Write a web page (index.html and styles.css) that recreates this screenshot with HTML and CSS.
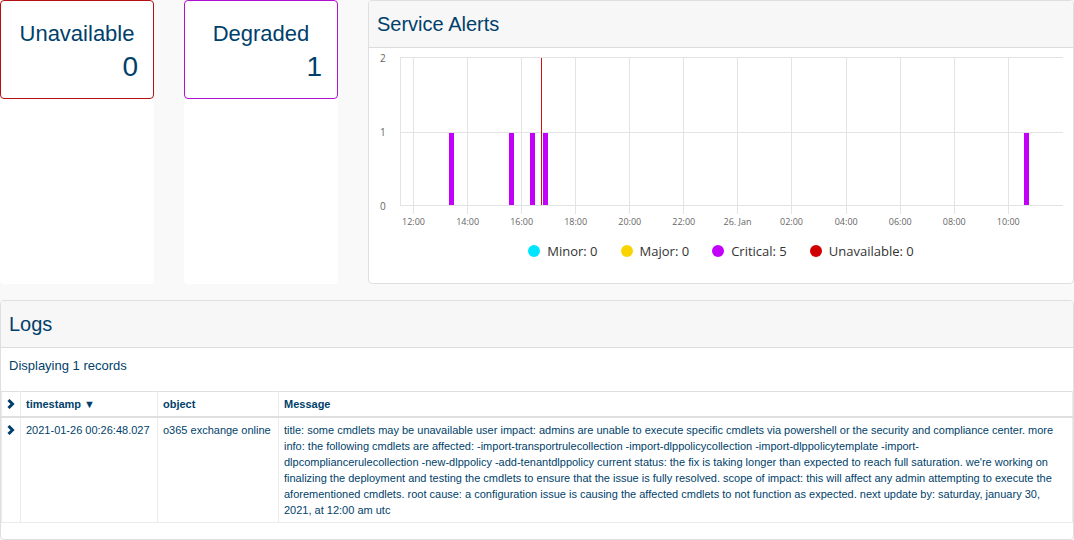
FILE: index.html
```html
<!DOCTYPE html>
<html lang="en">
<head>
    <meta charset="UTF-8">
    <meta name="viewport" content="width=device-width, initial-scale=1.0">
    <title>Service Status</title>
    <link rel="stylesheet" href="styles.css">
</head>
<body>
    <div class="dashboard">
        <div class="top-row">
            <div class="tile">
                <div class="tile-card unavailable">
                    <h3>Unavailable</h3>
                    <p>0</p>
                </div>
            </div>

            <div class="tile">
                <div class="tile-card degraded">
                    <h3>Degraded</h3>
                    <p>1</p>
                </div>
            </div>

            <div class="panel">
                <h2 class="panel-header">Service Alerts</h2>
                <div class="chart">
                    <div class="y-axis">
                        <span>2</span>
                        <span>1</span>
                        <span>0</span>
                    </div>
                    <svg class="plot" role="img" aria-label="Service alerts over time">
                        <g class="grid-lines">
                            <line x1="0" y1="5.5" x2="100%" y2="5.5"/>
                            <line x1="0" y1="80.5" x2="100%" y2="80.5"/>
                            <line x1="0" y1="153.5" x2="100%" y2="153.5"/>
                            <line x1="0.1%" y1="5" x2="0.1%" y2="153"/>
                            <line x1="2.04%" y1="5" x2="2.04%" y2="162"/>
                            <line x1="10.2%" y1="5" x2="10.2%" y2="162"/>
                            <line x1="18.35%" y1="5" x2="18.35%" y2="162"/>
                            <line x1="26.5%" y1="5" x2="26.5%" y2="162"/>
                            <line x1="34.65%" y1="5" x2="34.65%" y2="162"/>
                            <line x1="42.8%" y1="5" x2="42.8%" y2="162"/>
                            <line x1="50.9%" y1="5" x2="50.9%" y2="162"/>
                            <line x1="59.05%" y1="5" x2="59.05%" y2="162"/>
                            <line x1="67.3%" y1="5" x2="67.3%" y2="162"/>
                            <line x1="75.45%" y1="5" x2="75.45%" y2="162"/>
                            <line x1="83.6%" y1="5" x2="83.6%" y2="162"/>
                            <line x1="91.75%" y1="5" x2="91.75%" y2="162"/>
                        </g>
                        <g class="bars">
                            <rect x="7.39%" y="81" width="5" height="72"/>
                            <rect x="16.44%" y="81" width="5" height="72"/>
                            <rect x="19.61%" y="81" width="5" height="72"/>
                            <rect x="21.57%" y="81" width="5" height="72"/>
                            <rect x="94.12%" y="81" width="5" height="72"/>
                        </g>
                        <g class="now-line">
                            <rect x="21.27%" y="6" width="1" height="147"/>
                        </g>
                        <g class="x-labels">
                            <text x="2.04%" y="173">12:00</text>
                            <text x="10.2%" y="173">14:00</text>
                            <text x="18.35%" y="173">16:00</text>
                            <text x="26.5%" y="173">18:00</text>
                            <text x="34.65%" y="173">20:00</text>
                            <text x="42.8%" y="173">22:00</text>
                            <text x="50.9%" y="173">26. Jan</text>
                            <text x="59.05%" y="173">02:00</text>
                            <text x="67.3%" y="173">04:00</text>
                            <text x="75.45%" y="173">06:00</text>
                            <text x="83.6%" y="173">08:00</text>
                            <text x="91.75%" y="173">10:00</text>
                        </g>
                    </svg>
                </div>
                <ul class="legend">
                    <li class="minor">Minor: 0</li>
                    <li class="major">Major: 0</li>
                    <li class="critical">Critical: 5</li>
                    <li class="down">Unavailable: 0</li>
                </ul>
            </div>
        </div>

        <div class="panel">
            <h2 class="panel-header">Logs</h2>
            <p class="record-count">Displaying 1 records</p>
            <table class="logs">
                <colgroup>
                    <col class="col-toggle">
                    <col class="col-time">
                    <col class="col-object">
                    <col>
                </colgroup>
                <thead>
                    <tr>
                        <th class="toggle">
                            <button type="button" aria-label="Expand all">
                                <svg width="8" height="10" viewBox="0 0 8 10"><path d="M1.5 1L5.5 5l-4 4"/></svg>
                            </button>
                        </th>
                        <th><button type="button">timestamp ▼</button></th>
                        <th>object</th>
                        <th>Message</th>
                    </tr>
                </thead>
                <tbody>
                    <tr>
                        <td class="toggle">
                            <button type="button" aria-label="Expand row">
                                <svg width="8" height="10" viewBox="0 0 8 10"><path d="M1.5 1L5.5 5l-4 4"/></svg>
                            </button>
                        </td>
                        <td>2021-01-26 00:26:48.027</td>
                        <td>o365 exchange online</td>
                        <td>title: some cmdlets may be unavailable user impact: admins are unable to execute specific cmdlets via powershell or the security and compliance center. more info: the following cmdlets are affected: -import-transportrulecollection -import-dlppolicycollection -import-dlppolicytemplate -import-<br>dlpcompliancerulecollection -new-dlppolicy -add-tenantdlppolicy current status: the fix is taking longer than expected to reach full saturation. we're working on finalizing the deployment and testing the cmdlets to ensure that the issue is fully resolved. scope of impact: this will affect any admin attempting to execute the aforementioned cmdlets. root cause: a configuration issue is causing the affected cmdlets to not function as expected. next update by: saturday, january 30, 2021, at 12:00 am utc</td>
                    </tr>
                </tbody>
            </table>
        </div>
    </div>
</body>
</html>
```
FILE: styles.css
```css
* {
    margin: 0;
    padding: 0;
    box-sizing: border-box;
}

body {
    font-family: "Liberation Sans", Arial, sans-serif;
    background-color: #f9f9f9;
    color: #003f6b;
}

.dashboard {
    display: flex;
    flex-direction: column;
    gap: 16px;
}

.top-row {
    display: grid;
    grid-template-columns: 154px 154px 1fr;
    gap: 30px;
}

/* Status tiles */
.tile {
    background: white;
    border-radius: 4px;
}

.tile-card {
    background: white;
    border: 1px solid;
    border-radius: 4px;
    padding: 16px 15px 15px;
}

.tile-card h3 {
    font-size: 22px;
    font-weight: normal;
    line-height: 33px;
    text-align: center;
}

.tile-card p {
    font-size: 28px;
    line-height: 33px;
    text-align: right;
}

.unavailable {
    border-color: #b30f14;
}

.degraded {
    border-color: #b010d0;
}

/* Panels */
.panel {
    background: white;
    border: 1px solid #dfdfdf;
    border-radius: 4px;
    min-width: 0;
}

.panel-header {
    background-color: #f7f7f7;
    border-bottom: 1px solid #dcdcdc;
    border-radius: 3px 3px 0 0;
    padding: 11px 8px;
    font-size: 20px;
    font-weight: normal;
    line-height: 24px;
}

/* Chart */
.chart {
    display: flex;
    padding: 4px 10px 0 11px;
    font-family: "Open Sans", "Noto Sans", sans-serif;
}

.y-axis {
    display: flex;
    flex-direction: column;
    justify-content: space-between;
    width: 20px;
    height: 160px;
    font-size: 10px;
    line-height: 12px;
    color: #666;
}

.plot {
    flex: 1;
    min-width: 0;
    height: 176px;
}

.grid-lines line {
    stroke: #e3e3e3;
    shape-rendering: crispEdges;
}

.bars rect {
    fill: #c300fa;
    shape-rendering: crispEdges;
}

.now-line rect {
    fill: #d01010;
    shape-rendering: crispEdges;
}

.x-labels text {
    font-size: 9px;
    fill: #666;
    text-anchor: middle;
}

.legend {
    display: flex;
    justify-content: center;
    gap: 23px;
    padding: 13px 0 22px;
    list-style: none;
    font-family: "Open Sans", "Noto Sans", sans-serif;
    font-size: 13px;
    line-height: 20px;
    color: #333;
}

.legend li {
    display: flex;
    align-items: center;
    gap: 7px;
}

.legend li::before {
    content: "";
    width: 12px;
    height: 12px;
    border-radius: 50%;
}

.minor::before {
    background: #00e5ff;
}

.major::before {
    background: #fad400;
}

.critical::before {
    background: #c300fa;
}

.down::before {
    background: #d00000;
}

/* Logs */
.record-count {
    padding: 8px 8px 15px;
    font-size: 13px;
    line-height: 20px;
}

.logs {
    width: 100%;
    margin-bottom: 16px;
    border-collapse: collapse;
    table-layout: fixed;
    font-size: 11px;
    line-height: 16px;
}

.col-toggle {
    width: 19px;
}

.col-time {
    width: 137px;
}

.col-object {
    width: 121px;
}

.logs th,
.logs td {
    border: 1px solid #ebebeb;
    padding: 4px 5px;
    text-align: left;
    vertical-align: top;
}

.logs th {
    border-top-color: #dfdfdf;
    border-bottom: 2px solid #dfdfdf;
}

.logs button {
    background: none;
    border: none;
    font: inherit;
    color: inherit;
    cursor: pointer;
}

.toggle button {
    display: flex;
    align-items: center;
    height: 16px;
}

.toggle path {
    fill: none;
    stroke: currentColor;
    stroke-width: 3;
}

/* Small screens */
@media (max-width: 768px) {
    .top-row {
        grid-template-columns: 1fr 1fr;
    }

    .top-row .panel {
        grid-column: 1 / -1;
    }
}
```
